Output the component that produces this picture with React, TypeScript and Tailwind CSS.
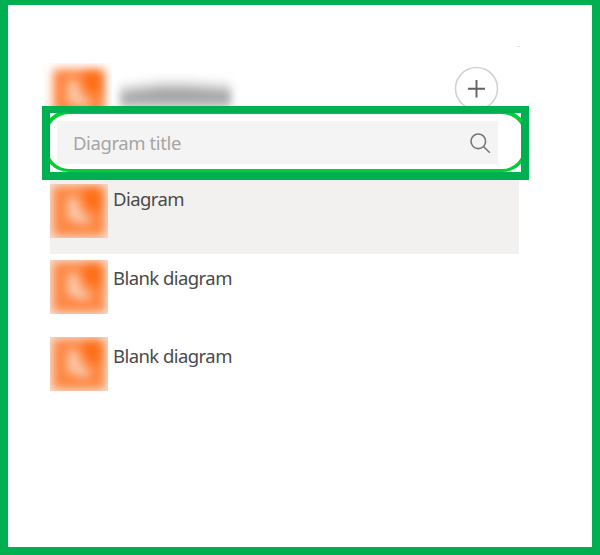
import React from "react";

function Thumb({ id, soft = false }: { id: string; soft?: boolean }) {
  return (
    <svg
      className={soft ? "h-[58px] w-[70px] shrink-0" : "h-[54px] w-[58px] shrink-0"}
      viewBox={soft ? "-8 -4 70 58" : "0 0 58 54"}
      aria-hidden="true"
    >
      <defs>
        <filter id={id + "-edge"} x="-40%" y="-40%" width="180%" height="180%" colorInterpolationFilters="sRGB">
          <feGaussianBlur stdDeviation="4.8" />
        </filter>
        <filter id={id + "-mark"} x="-80%" y="-80%" width="260%" height="260%" colorInterpolationFilters="sRGB">
          <feGaussianBlur stdDeviation="5" />
        </filter>
      </defs>
      {!soft && <rect width="58" height="54" fill="#f5e0d4" />}
      <rect x="3" y="2" width="52" height="50" rx="2" fill="#ff8742" filter={`url(#${id}-edge)`} />
      <path d="M34 6H49V27H45L35 18Z" fill="#ff6a10" filter={`url(#${id}-mark)`} />
      <path d="M18 13L27 13L31 27L41 35L36 41L17 35Z" fill="#fac8aa" filter={`url(#${id}-mark)`} />
    </svg>
  );
}

function Row({ id, label, className, textClass }: { id: string; label: string; className: string; textClass: string }) {
  return (
    <li className={"flex items-start gap-[5px] " + className}>
      <Thumb id={id} />
      <span className={"text-[18.5px] leading-[27px] tracking-[-0.56px] text-[#4a4a4a] " + textClass}>{label}</span>
    </li>
  );
}

export default function App() {
  return (
    <main className="flex h-[555px] w-[600px] flex-col overflow-hidden border-8 border-t-[5px] border-[#00b050] bg-white font-['Noto_Sans','Open_Sans',sans-serif]">
      <header className="flex h-[101px] shrink-0 items-start overflow-hidden pl-[34px]">
        <div className="mt-[58px]">
          <Thumb id="account" soft />
        </div>
        <svg className="mt-[60px] h-[58px] w-[150px] shrink-0" viewBox="0 0 150 58" aria-hidden="true">
          <defs>
            <filter id="name-blur" x="-20%" y="-200%" width="140%" height="500%" colorInterpolationFilters="sRGB">
              <feGaussianBlur stdDeviation="4.5 7" />
            </filter>
          </defs>
          <path d="M8 26L50 21L72 21L119 24V41H8Z" fill="#9c9c9c" filter="url(#name-blur)" />
        </svg>
        <svg className="ml-[192px] mt-[61px] h-[46px] w-[46px] shrink-0" viewBox="0 0 46 46" fill="none">
          <circle cx="22.5" cy="22.5" r="21" stroke="#d2d2d2" strokeWidth="1.6" />
          <path d="M14 22.8H31M22.5 14V31.5" stroke="#626262" strokeWidth="1.9" />
        </svg>
        <span className="ml-[17px] mt-[41px] h-px w-[3px] bg-[#e4e4e4]" />
      </header>

      <section className="ml-[34px] h-[74px] w-[487px] shrink-0 border-8 border-t-[7px] border-[#00b050] bg-white">
        <div className="h-full overflow-hidden">
          <div className="-mx-[7px] -mt-[3px] h-[62px] rounded-[26px] border-4 border-b-[3px] border-[#00cf35] pl-[10px] pt-[7px]">
            <div className="flex h-[43px] w-[441px] items-center justify-between bg-[#f4f4f4] pl-4 pr-[7px]">
              <span className="text-[18.5px] leading-[27px] tracking-[-0.4px] text-[#a5a5a5]">Diagram title</span>
              <svg className="h-[22px] w-[22px]" viewBox="0 0 22 22" fill="none" stroke="#777" strokeWidth="1.6">
                <circle cx="9.3" cy="9.3" r="7.3" />
                <path d="M14.5 14.5L20.8 20.8" />
              </svg>
            </div>
          </div>
        </div>
      </section>

      <ul className="ml-[42px] w-[469px]">
        <Row id="first" label="Diagram" className="h-[74px] bg-[#f3f1f0] pt-1" textClass="mt-px" />
        <Row id="second" label="Blank diagram" className="mt-[6px] h-[77px]" textClass="mt-1" />
        <Row id="third" label="Blank diagram" className="h-[77px]" textClass="mt-[5px]" />
      </ul>
    </main>
  );
}
